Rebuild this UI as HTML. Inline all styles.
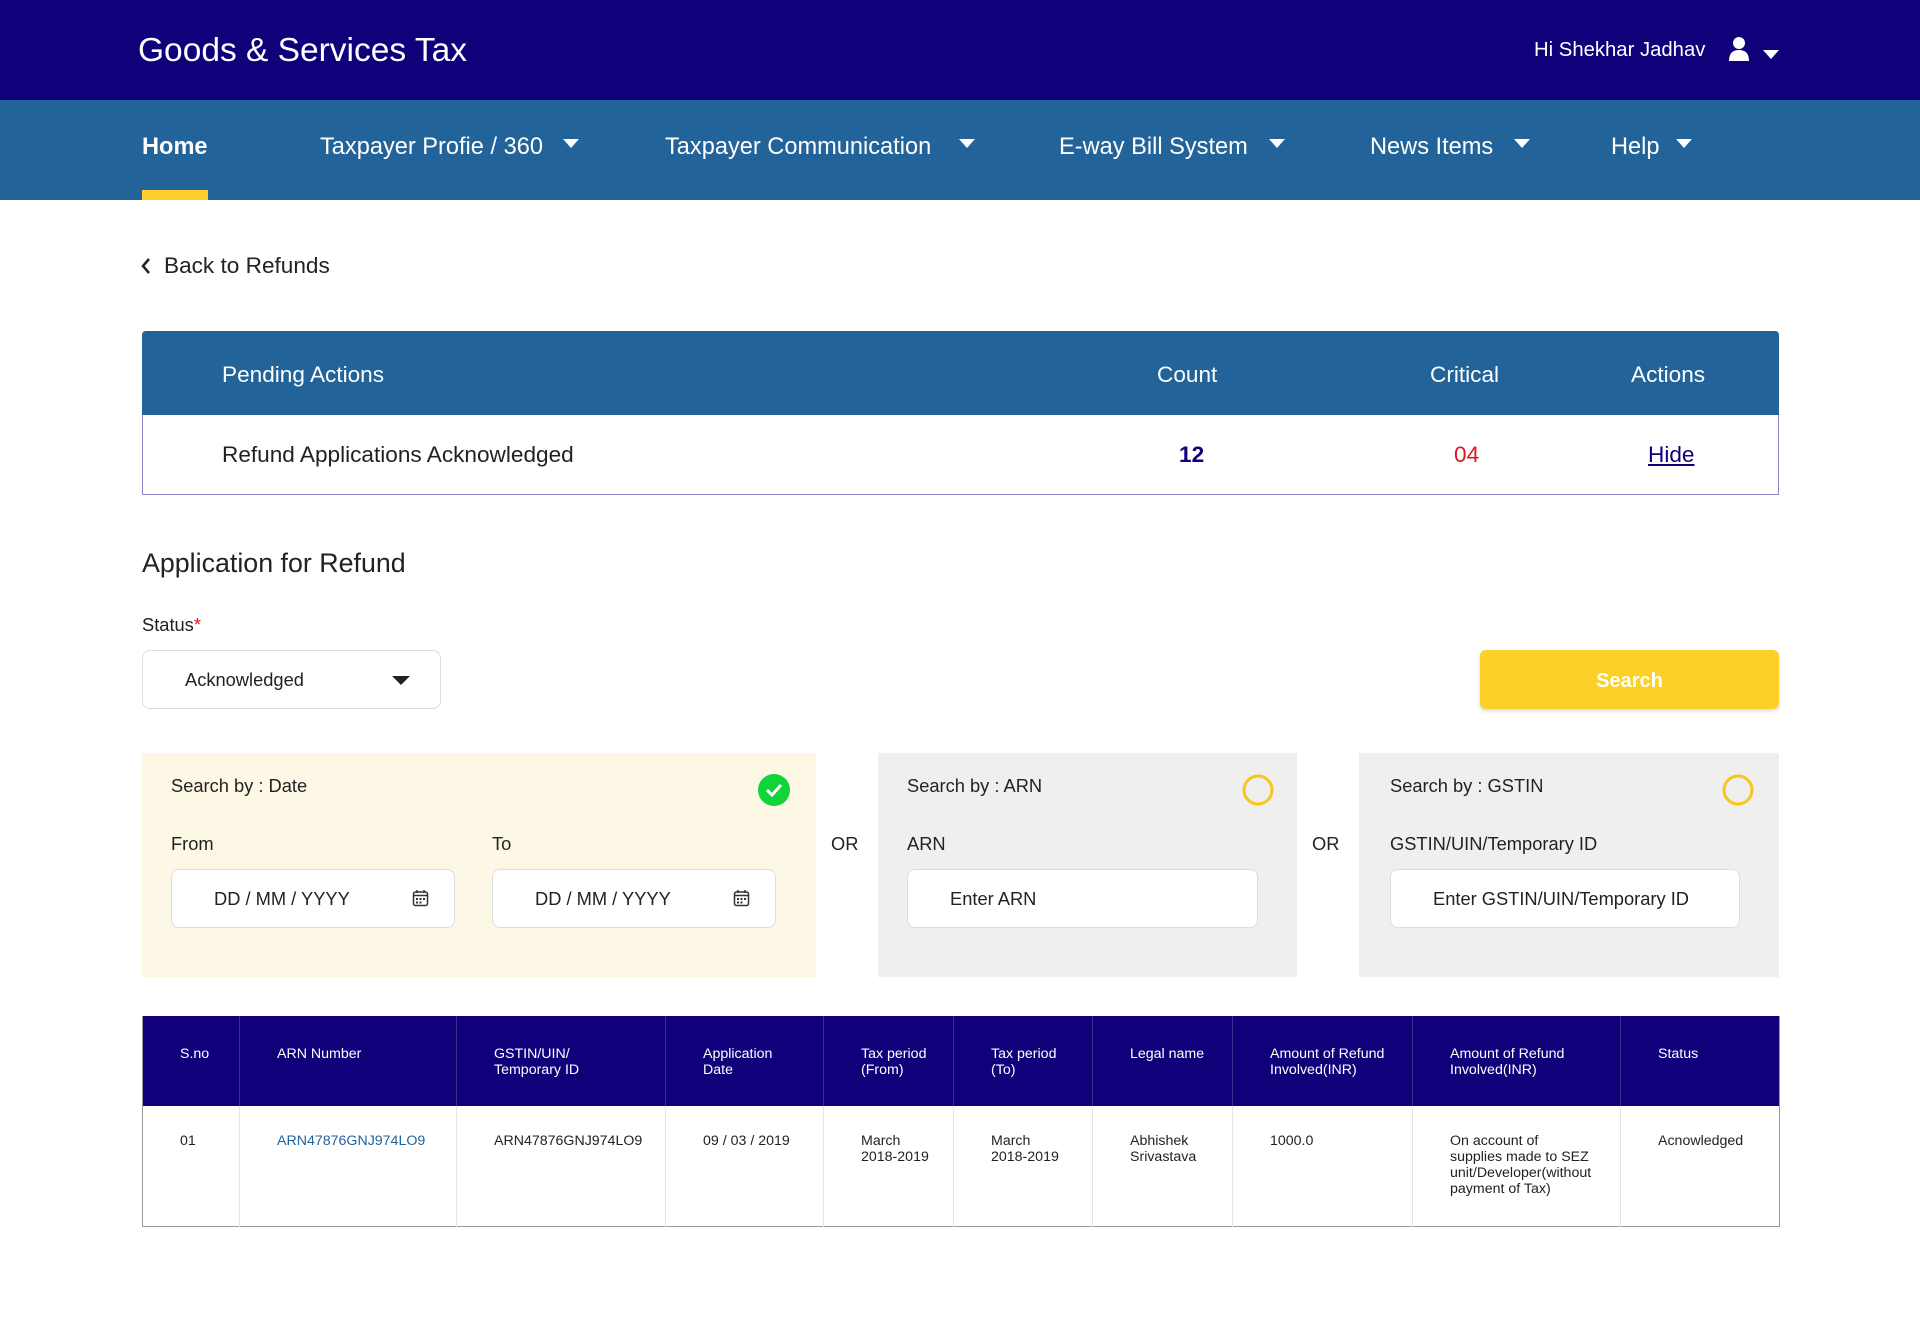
<!DOCTYPE html>
<html><head><meta charset="utf-8"><style>
*{margin:0;padding:0;box-sizing:border-box}
body{width:1920px;height:1319px;position:relative;background:#fff;font-family:"Liberation Sans",Arial,sans-serif;color:#222;overflow:hidden}
.a{position:absolute;white-space:nowrap}
.hdr{position:absolute;left:0;top:0;width:1920px;height:100px;background:#10007a}
.nav{position:absolute;left:0;top:100px;width:1920px;height:100px;background:#226399}
.nv{position:absolute;top:132px;font-size:23.6px;color:#fff;line-height:30px}
.car{position:absolute;width:0;height:0;border-left:8px solid transparent;border-right:8px solid transparent;border-top:9px solid #fff}
.inp{position:absolute;background:#fff;border:1px solid #ddd;border-radius:8px;height:59px;font-size:18.3px;line-height:57px;padding-left:42px;color:#222}
.lbl{position:absolute;font-size:18.3px;color:#222}
table{border-collapse:collapse;position:absolute;left:142px;top:1016px;width:1637px;font-size:14.2px;table-layout:fixed}
th{background:#10007a;color:#fff;font-weight:normal;text-align:left;height:90px;padding:30px 0 0 37px;border-right:1px solid #3a3090;line-height:16px;vertical-align:top}
td{height:120px;vertical-align:top;padding:27px 0 0 37px;border-right:1px solid #e5e5e5;line-height:16px;color:#222}
td:last-child,th:last-child{border-right:none}
</style></head><body>
<div class="hdr"></div>
<div class="a" style="left:138px;top:32px;font-size:33.5px;color:#fff;line-height:38px">Goods &amp; Services Tax</div>
<div class="a" style="left:1534px;top:38px;font-size:20.3px;color:#fff;line-height:25px">Hi Shekhar Jadhav</div>
<svg class="a" style="left:1728px;top:36px" width="22" height="26" viewBox="0 0 22 26"><circle cx="11" cy="7" r="6" fill="#fff"/><path d="M1 25 Q1 14 11 14 Q21 14 21 25 Z" fill="#fff"/></svg>
<div class="car" style="left:1763px;top:50px"></div>
<div class="nav"></div>
<div class="nv" style="left:142px;font-weight:bold">Home</div>
<div class="a" style="left:142px;top:190px;width:66px;height:10px;background:#fdd12b"></div>
<div class="nv" style="left:320px">Taxpayer Profie / 360</div><div class="car" style="left:563px;top:139px"></div>
<div class="nv" style="left:665px">Taxpayer Communication</div><div class="car" style="left:959px;top:139px"></div>
<div class="nv" style="left:1059px">E-way Bill System</div><div class="car" style="left:1269px;top:139px"></div>
<div class="nv" style="left:1370px">News Items</div><div class="car" style="left:1514px;top:139px"></div>
<div class="nv" style="left:1611px">Help</div><div class="car" style="left:1676px;top:139px"></div>

<svg class="a" style="left:140px;top:256px" width="12" height="20" viewBox="0 0 12 20"><path d="M9 3 L3 10 L9 17" stroke="#222" stroke-width="2.5" fill="none"/></svg>
<div class="a" style="left:164px;top:253px;font-size:22.6px;line-height:26px">Back to Refunds</div>

<div class="a" style="left:142px;top:331px;width:1637px;height:164px;border:1px solid #8c87c8;border-top:none;border-radius:4px 4px 0 0"></div>
<div class="a" style="left:142px;top:331px;width:1637px;height:84px;background:#226399;border-radius:4px 4px 0 0"></div>
<div class="a" style="left:222px;top:362px;font-size:22.6px;color:#fff">Pending Actions</div>
<div class="a" style="left:1157px;top:362px;font-size:22.6px;color:#fff">Count</div>
<div class="a" style="left:1430px;top:362px;font-size:22.6px;color:#fff">Critical</div>
<div class="a" style="left:1631px;top:362px;font-size:22.6px;color:#fff">Actions</div>
<div class="a" style="left:222px;top:442px;font-size:22.6px">Refund Applications Acknowledged</div>
<div class="a" style="left:1179px;top:442px;font-size:22.6px;color:#10007a;font-weight:bold">12</div>
<div class="a" style="left:1454px;top:442px;font-size:22.6px;color:#e0161c">04</div>
<div class="a" style="left:1648px;top:442px;font-size:22.6px;color:#10007a;text-decoration:underline">Hide</div>

<div class="a" style="left:142px;top:548px;font-size:26.8px;line-height:30px">Application for Refund</div>
<div class="a" style="left:142px;top:614px;font-size:18.3px">Status<span style="color:#e0161c">*</span></div>
<div class="inp" style="left:142px;top:650px;width:299px">Acknowledged</div>
<div class="car" style="left:392px;top:676px;border-top-color:#222;border-left-width:9px;border-right-width:9px"></div>
<div class="a" style="left:1480px;top:650px;width:299px;height:59px;background:#fcd026;border-radius:6px;color:#fff;font-weight:bold;font-size:20px;text-align:center;line-height:62px;box-shadow:0 2px 4px rgba(0,0,0,.15)">Search</div>

<div class="a" style="left:142px;top:753px;width:674px;height:224px;background:#fdf7e5"></div>
<div class="a" style="left:878px;top:753px;width:419px;height:224px;background:#efefef"></div>
<div class="a" style="left:1359px;top:753px;width:420px;height:224px;background:#efefef"></div>
<div class="lbl" style="left:171px;top:775px">Search by : Date</div>
<div class="lbl" style="left:907px;top:775px">Search by : ARN</div>
<div class="lbl" style="left:1390px;top:775px">Search by : GSTIN</div>
<svg class="a" style="left:758px;top:774px" width="32" height="32"><circle cx="16" cy="16" r="16" fill="#10d43a"/><path d="M9 16 L14 21 L23 11" stroke="#fff" stroke-width="3" fill="none"/></svg>
<svg class="a" style="left:1242px;top:774px" width="32" height="32"><circle cx="16" cy="16" r="14" fill="none" stroke="#f8c51f" stroke-width="3"/></svg>
<svg class="a" style="left:1722px;top:774px" width="32" height="32"><circle cx="16" cy="16" r="14" fill="none" stroke="#f8c51f" stroke-width="3"/></svg>
<div class="lbl" style="left:831px;top:833px">OR</div>
<div class="lbl" style="left:1312px;top:833px">OR</div>
<div class="lbl" style="left:171px;top:833px">From</div>
<div class="lbl" style="left:492px;top:833px">To</div>
<div class="lbl" style="left:907px;top:833px">ARN</div>
<div class="lbl" style="left:1390px;top:833px">GSTIN/UIN/Temporary ID</div>
<div class="inp" style="left:171px;top:869px;width:284px">DD / MM / YYYY</div>
<div class="inp" style="left:492px;top:869px;width:284px">DD / MM / YYYY</div>
<svg class="a" style="left:412px;top:889px" width="17" height="18" viewBox="0 0 17 18"><rect x="1.5" y="3" width="14" height="13.5" rx="2" fill="none" stroke="#333" stroke-width="1.5"/><path d="M5 1v3M12 1v3M1.5 6.5h14" stroke="#333" stroke-width="1.5"/><path d="M4 9h2v2H4zM7.5 9h2v2h-2zM11 9h2v2h-2zM4 12.5h2v2H4zM7.5 12.5h2v2h-2z" fill="#333"/></svg>
<svg class="a" style="left:733px;top:889px" width="17" height="18" viewBox="0 0 17 18"><rect x="1.5" y="3" width="14" height="13.5" rx="2" fill="none" stroke="#333" stroke-width="1.5"/><path d="M5 1v3M12 1v3M1.5 6.5h14" stroke="#333" stroke-width="1.5"/><path d="M4 9h2v2H4zM7.5 9h2v2h-2zM11 9h2v2h-2zM4 12.5h2v2H4zM7.5 12.5h2v2h-2z" fill="#333"/></svg>
<div class="inp" style="left:907px;top:869px;width:351px">Enter ARN</div>
<div class="inp" style="left:1390px;top:869px;width:350px">Enter GSTIN/UIN/Temporary ID</div>

<table style="border:1px solid #999;border-top:none">
<colgroup><col style="width:97px"><col style="width:217px"><col style="width:209px"><col style="width:158px"><col style="width:130px"><col style="width:139px"><col style="width:140px"><col style="width:180px"><col style="width:208px"><col style="width:159px"></colgroup>
<tr><th>S.no</th><th>ARN Number</th><th>GSTIN/UIN/<br>Temporary ID</th><th>Application<br>Date</th><th>Tax period<br>(From)</th><th>Tax period<br>(To)</th><th>Legal name</th><th>Amount of Refund<br>Involved(INR)</th><th>Amount of Refund<br>Involved(INR)</th><th>Status</th></tr>
<tr><td>01</td><td style="color:#226399">ARN47876GNJ974LO9</td><td>ARN47876GNJ974LO9</td><td>09 / 03 / 2019</td><td>March<br>2018-2019</td><td>March<br>2018-2019</td><td>Abhishek<br>Srivastava</td><td>1000.0</td><td>On account of<br>supplies made to SEZ<br>unit/Developer(without<br>payment of Tax)</td><td>Acnowledged</td></tr>
</table>
</body></html>
